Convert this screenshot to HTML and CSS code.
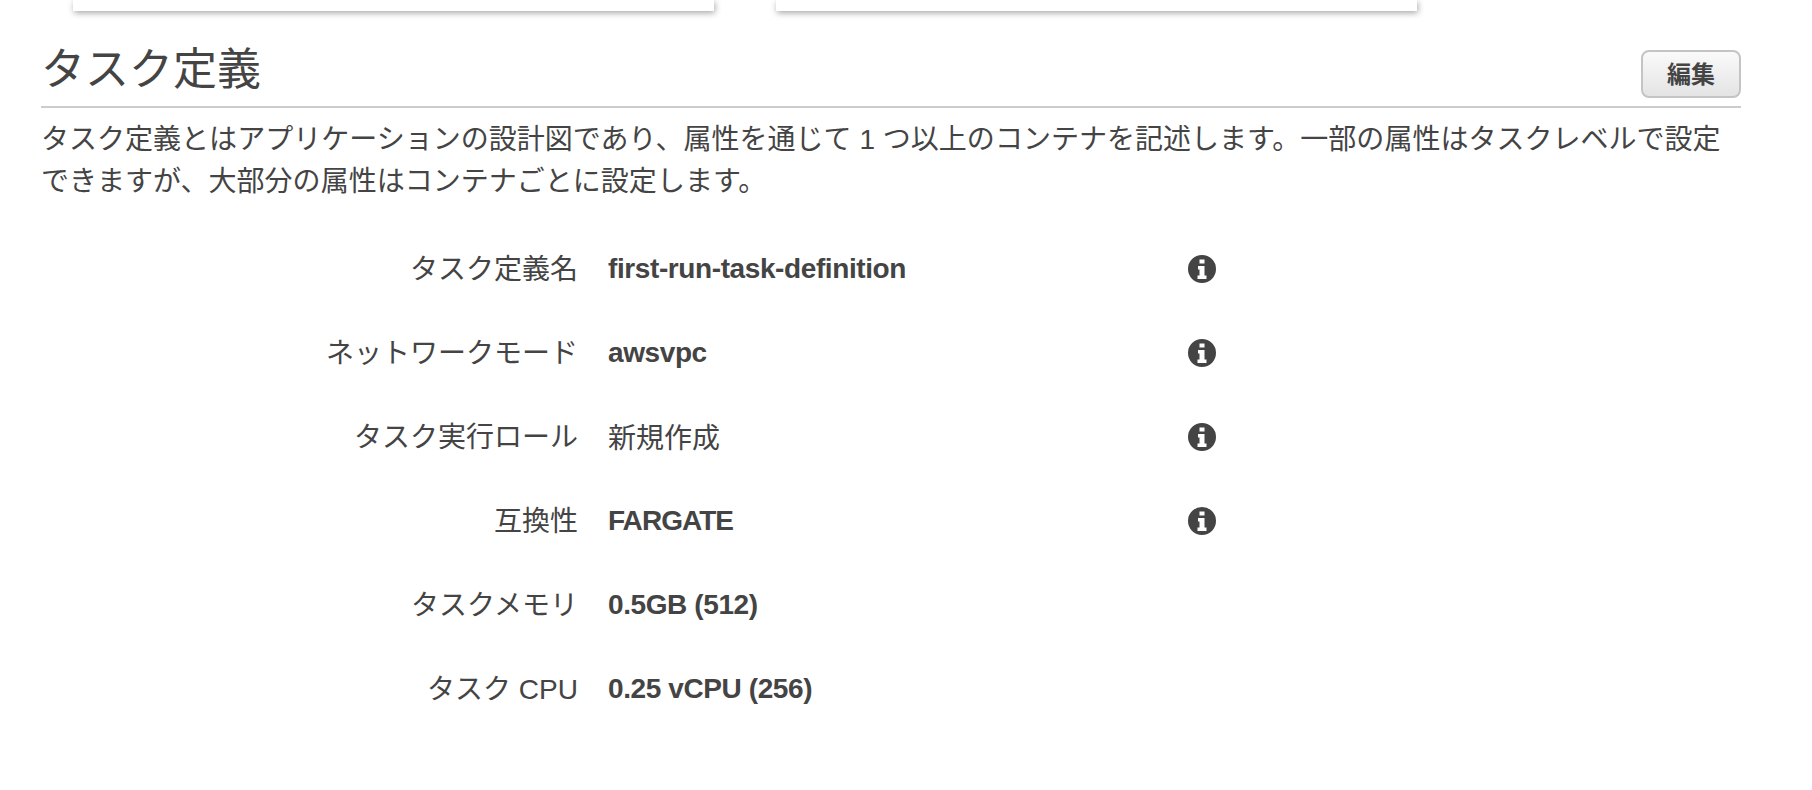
FILE: index.html
```html
<!DOCTYPE html>
<html lang="ja">
<head>
  <meta charset="UTF-8">
  <title>タスク定義</title>
  <link rel="stylesheet" href="styles.css">
</head>
<body>
  <div class="card-row">
    <div class="card"></div>
    <div class="card"></div>
  </div>

  <div class="section">
    <div class="section-head">
      <h2>タスク定義</h2>
      <button type="button" class="btn">編集</button>
    </div>
    <p class="intro">タスク定義とはアプリケーションの設計図であり、属性を通じて 1 つ以上のコンテナを記述します。一部の属性はタスクレベルで設定できますが、大部分の属性はコンテナごとに設定します。</p>

    <div class="fields">
      <div class="field">
        <div class="field-label">タスク定義名</div>
        <div class="field-value strong">first-run-task-definition</div>
        <svg class="info" viewBox="0 0 28 28"><path fill-rule="evenodd" d="M14 0a14 14 0 1 0 0 28a14 14 0 1 0 0-28zM11.500 4.500h5v4h-5zM10 11h6.500v9.500h2v3.500h-9v-3.500h2v-6h-1.500z"/></svg>
      </div>
      <div class="field">
        <div class="field-label">ネットワークモード</div>
        <div class="field-value strong">awsvpc</div>
        <svg class="info" viewBox="0 0 28 28"><path fill-rule="evenodd" d="M14 0a14 14 0 1 0 0 28a14 14 0 1 0 0-28zM11.500 4.500h5v4h-5zM10 11h6.500v9.500h2v3.500h-9v-3.500h2v-6h-1.500z"/></svg>
      </div>
      <div class="field">
        <div class="field-label">タスク実行ロール</div>
        <div class="field-value plain">新規作成</div>
        <svg class="info" viewBox="0 0 28 28"><path fill-rule="evenodd" d="M14 0a14 14 0 1 0 0 28a14 14 0 1 0 0-28zM11.500 4.500h5v4h-5zM10 11h6.500v9.500h2v3.500h-9v-3.500h2v-6h-1.500z"/></svg>
      </div>
      <div class="field">
        <div class="field-label">互換性</div>
        <div class="field-value strong caps">FARGATE</div>
        <svg class="info" viewBox="0 0 28 28"><path fill-rule="evenodd" d="M14 0a14 14 0 1 0 0 28a14 14 0 1 0 0-28zM11.500 4.500h5v4h-5zM10 11h6.500v9.500h2v3.500h-9v-3.500h2v-6h-1.500z"/></svg>
      </div>
      <div class="field">
        <div class="field-label">タスクメモリ</div>
        <div class="field-value strong">0.5GB (512)</div>
      </div>
      <div class="field">
        <div class="field-label">タスク CPU</div>
        <div class="field-value strong">0.25 vCPU (256)</div>
      </div>
    </div>
  </div>
</body>
</html>
```

FILE: styles.css
```css
html, body { margin: 0; padding: 0; background: #fff; }
body {
  height: 790px; overflow: hidden; color: #444;
  font-family: "Liberation Sans", "Noto Sans CJK JP", sans-serif;
  font-size: 28px;
}
.card-row { display: flex; gap: 62px; padding-left: 73px; }
.card {
  width: 641px; height: 11px; background: #fff;
  box-shadow: 1px 2px 6px rgba(0, 0, 0, 0.35);
}
.section { padding: 0 71px 0 41px; }
.section-head {
  display: flex; justify-content: space-between; align-items: flex-end;
  height: 97px; padding-bottom: 8px; box-sizing: border-box;
  border-bottom: 2px solid #ccc;
}
.section-head h2 { margin: 0 0 -7px; font-size: 44px; font-weight: 400; line-height: 70px; }
.btn {
  width: 100px; height: 48px; padding: 0 0 4px;
  border: 2px solid #c4c4c4; border-radius: 8px;
  background: linear-gradient(#fafafa, #e4e4e4);
  color: #444; font: bold 24px "Liberation Sans", "Noto Sans CJK JP", sans-serif;
}
.intro { margin: 0; padding-top: 11px; line-height: 41.5px; letter-spacing: 0.02px; }
.fields { margin-top: 25px; }
.field { display: flex; align-items: center; height: 84px; }
.field-label { width: 537px; margin-top: -4px; text-align: right; }
.field-value { width: 580px; margin-left: 30px; }
.plain { margin-top: -3px; }
.strong { font-weight: bold; letter-spacing: -0.4px; }
.caps { letter-spacing: -0.95px; }
.info { width: 28px; height: 28px; fill: #444; }
```
